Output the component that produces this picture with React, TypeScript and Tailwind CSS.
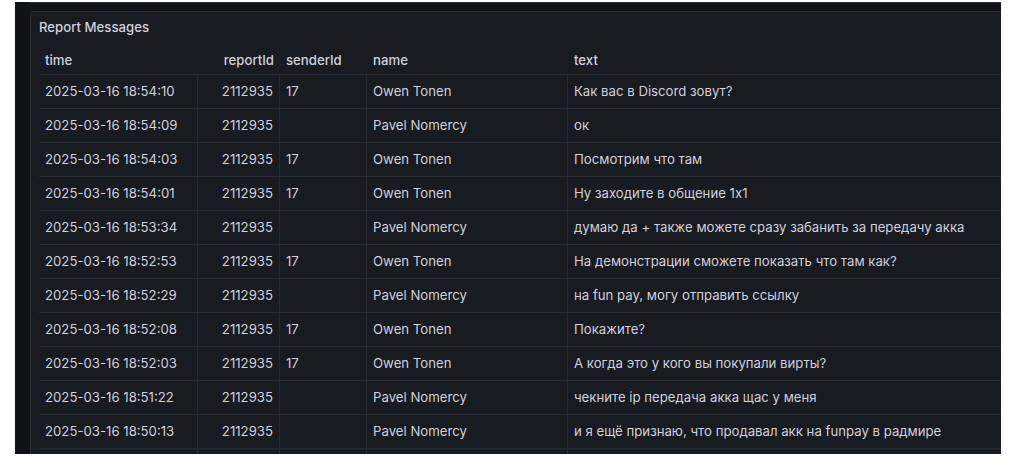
import React from 'react';

type Msg = { time: string; sender: string; name: string; text: string };

const rows: Msg[] = [
  { time: '2025-03-16 18:54:10', sender: '17', name: 'Owen Tonen', text: 'Как вас в Discord зовут?' },
  { time: '2025-03-16 18:54:09', sender: '', name: 'Pavel Nomercy', text: 'ок' },
  { time: '2025-03-16 18:54:03', sender: '17', name: 'Owen Tonen', text: 'Посмотрим что там' },
  { time: '2025-03-16 18:54:01', sender: '17', name: 'Owen Tonen', text: 'Ну заходите в общение 1x1' },
  { time: '2025-03-16 18:53:34', sender: '', name: 'Pavel Nomercy', text: 'думаю да + также можете сразу забанить за передачу акка' },
  { time: '2025-03-16 18:52:53', sender: '17', name: 'Owen Tonen', text: 'На демонстрации сможете показать что там как?' },
  { time: '2025-03-16 18:52:29', sender: '', name: 'Pavel Nomercy', text: 'на fun pay, могу отправить ссылку' },
  { time: '2025-03-16 18:52:08', sender: '17', name: 'Owen Tonen', text: 'Покажите?' },
  { time: '2025-03-16 18:52:03', sender: '17', name: 'Owen Tonen', text: 'А когда это у кого вы покупали вирты?' },
  { time: '2025-03-16 18:51:22', sender: '', name: 'Pavel Nomercy', text: 'чекните ip передача акка щас у меня' },
  { time: '2025-03-16 18:50:13', sender: '', name: 'Pavel Nomercy', text: 'и я ещё признаю, что продавал акк на funpay в радмире' },
  { time: '2025-03-16 18:49:09', sender: '', name: 'Pavel Nomercy', text: 'ой я бы' },
];

const cols = 'grid grid-cols-[159px_82px_87px_201px_1fr]';

const App: React.FC = () => {
  return (
    <div className="w-[1012px] h-[464px] bg-white pl-[15px] pr-[11px] pt-[2px] pb-[10px] font-['Inter',sans-serif]">
      <div className="h-full bg-[#111217] overflow-hidden flex flex-col">
        {/* bottom edge of the panel above */}
        <div className="ml-[15px] h-[1px] bg-[#2c2f35] shrink-0" />

        <div className="ml-[15px] mt-[8px] w-[990px] shrink-0 bg-[#181b1f] border border-[#2a2d32] rounded-[3px] text-[13.2px] text-[#d0d0de]">
          <div className="h-[30px] flex items-start pt-[6px] px-2 font-medium">Report Messages</div>

          <div className="ml-2">
            <div className={`${cols} h-[33px] items-end pb-[3px] border-b border-[#272a2f] font-medium`}>
              <div className="px-1.5">time</div>
              <div className="px-1.5 text-right">reportId</div>
              <div className="px-1.5">senderId</div>
              <div className="px-1.5">name</div>
              <div className="px-1.5">text</div>
            </div>

            {rows.map((r, i) => (
              <div key={i} className={`${cols} h-[34px] border-b border-[#272a2f]`}>
                <div className="px-1.5 flex items-center border-r border-[#272a2f]">{r.time}</div>
                <div className="px-1.5 flex items-center justify-end border-r border-[#272a2f]">2112935</div>
                <div className="px-1.5 flex items-center border-r border-[#272a2f]">{r.sender}</div>
                <div className="px-1.5 flex items-center border-r border-[#272a2f]">{r.name}</div>
                <div className="px-1.5 flex items-center whitespace-nowrap">{r.text}</div>
              </div>
            ))}
          </div>
        </div>
      </div>
    </div>
  );
};

export default App;
